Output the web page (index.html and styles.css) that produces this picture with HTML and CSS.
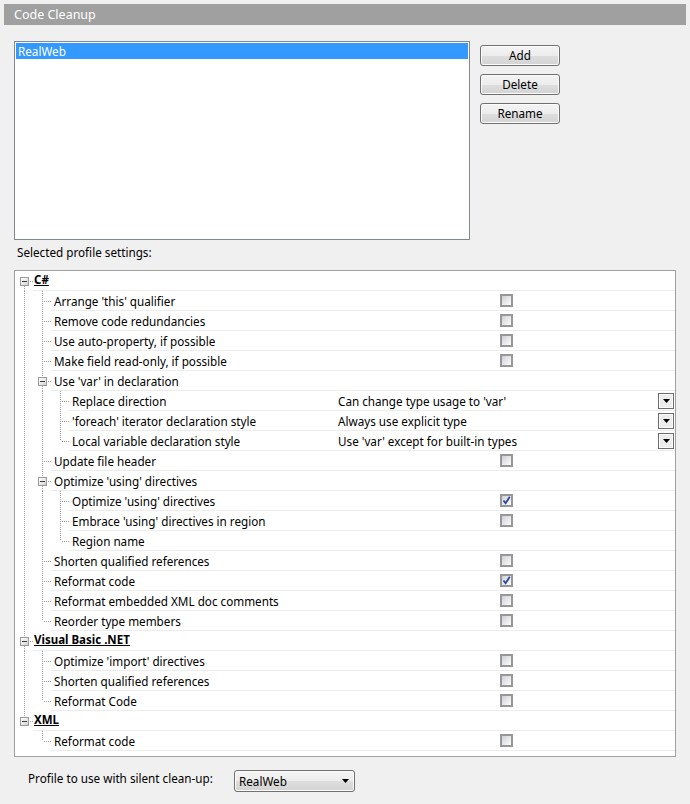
FILE: index.html
```html
<!DOCTYPE html>
<html>
<head>
<meta charset="utf-8">
<link rel="stylesheet" href="styles.css">
</head>
<body>
<div class="header">Code Cleanup</div>

<div class="top">
  <div class="listbox">
    <div class="sel">RealWeb</div>
  </div>
  <div class="buttons">
    <button class="btn">Add</button>
    <button class="btn">Delete</button>
    <button class="btn">Rename</button>
  </div>
</div>

<div class="label">Selected profile settings:</div>

<div class="tree">
  <div class="row"><span class="c x dn"><i class="box"></i></span><div class="content l0"><span class="name head">C#</span></div></div>
  <div class="row"><span class="c v"></span><span class="c t"></span><div class="content l1"><span class="name">Arrange 'this' qualifier</span><span class="val"><i class="cb"></i></span></div></div>
  <div class="row"><span class="c v"></span><span class="c t"></span><div class="content l1"><span class="name">Remove code redundancies</span><span class="val"><i class="cb"></i></span></div></div>
  <div class="row"><span class="c v"></span><span class="c t"></span><div class="content l1"><span class="name">Use auto-property, if possible</span><span class="val"><i class="cb"></i></span></div></div>
  <div class="row"><span class="c v"></span><span class="c t"></span><div class="content l1"><span class="name">Make field read-only, if possible</span><span class="val"><i class="cb"></i></span></div></div>
  <div class="row"><span class="c v"></span><span class="c x up dn"><i class="box"></i></span><div class="content l1"><span class="name">Use 'var' in declaration</span></div></div>
  <div class="row"><span class="c v"></span><span class="c v"></span><span class="c t"></span><div class="content l2"><span class="name">Replace direction</span><span class="val drop"><span class="dtext">Can change type usage to 'var'</span><i class="dbtn"><svg width="7" height="4" viewBox="0 0 7 4"><polygon points="0,0 7,0 3.5,4" fill="#000"/></svg></i></span></div></div>
  <div class="row"><span class="c v"></span><span class="c v"></span><span class="c t"></span><div class="content l2"><span class="name">'foreach' iterator declaration style</span><span class="val drop"><span class="dtext">Always use explicit type</span><i class="dbtn"><svg width="7" height="4" viewBox="0 0 7 4"><polygon points="0,0 7,0 3.5,4" fill="#000"/></svg></i></span></div></div>
  <div class="row"><span class="c v"></span><span class="c v"></span><span class="c l"></span><div class="content l2"><span class="name">Local variable declaration style</span><span class="val drop"><span class="dtext">Use 'var' except for built-in types</span><i class="dbtn"><svg width="7" height="4" viewBox="0 0 7 4"><polygon points="0,0 7,0 3.5,4" fill="#000"/></svg></i></span></div></div>
  <div class="row"><span class="c v"></span><span class="c t"></span><div class="content l1"><span class="name">Update file header</span><span class="val"><i class="cb"></i></span></div></div>
  <div class="row"><span class="c v"></span><span class="c x up dn"><i class="box"></i></span><div class="content l1"><span class="name">Optimize 'using' directives</span></div></div>
  <div class="row"><span class="c v"></span><span class="c v"></span><span class="c t"></span><div class="content l2"><span class="name">Optimize 'using' directives</span><span class="val"><i class="cb"><svg width="9" height="9" viewBox="0 0 9 9"><path d="M1.5 4.5 L3.6 7.3 L7.8 0.8" fill="none" stroke="#2f44a0" stroke-width="1.8"/></svg></i></span></div></div>
  <div class="row"><span class="c v"></span><span class="c v"></span><span class="c t"></span><div class="content l2"><span class="name">Embrace 'using' directives in region</span><span class="val"><i class="cb"></i></span></div></div>
  <div class="row"><span class="c v"></span><span class="c v"></span><span class="c l"></span><div class="content l2"><span class="name">Region name</span></div></div>
  <div class="row"><span class="c v"></span><span class="c t"></span><div class="content l1"><span class="name">Shorten qualified references</span><span class="val"><i class="cb"></i></span></div></div>
  <div class="row"><span class="c v"></span><span class="c t"></span><div class="content l1"><span class="name">Reformat code</span><span class="val"><i class="cb"><svg width="9" height="9" viewBox="0 0 9 9"><path d="M1.5 4.5 L3.6 7.3 L7.8 0.8" fill="none" stroke="#2f44a0" stroke-width="1.8"/></svg></i></span></div></div>
  <div class="row"><span class="c v"></span><span class="c t"></span><div class="content l1"><span class="name">Reformat embedded XML doc comments</span><span class="val"><i class="cb"></i></span></div></div>
  <div class="row"><span class="c v"></span><span class="c l"></span><div class="content l1"><span class="name">Reorder type members</span><span class="val"><i class="cb"></i></span></div></div>
  <div class="row"><span class="c x up dn"><i class="box"></i></span><div class="content l0"><span class="name head">Visual Basic .NET</span></div></div>
  <div class="row"><span class="c v"></span><span class="c t"></span><div class="content l1"><span class="name">Optimize 'import' directives</span><span class="val"><i class="cb"></i></span></div></div>
  <div class="row"><span class="c v"></span><span class="c t"></span><div class="content l1"><span class="name">Shorten qualified references</span><span class="val"><i class="cb"></i></span></div></div>
  <div class="row"><span class="c v"></span><span class="c l"></span><div class="content l1"><span class="name">Reformat Code</span><span class="val"><i class="cb"></i></span></div></div>
  <div class="row"><span class="c x up"><i class="box"></i></span><div class="content l0"><span class="name head">XML</span></div></div>
  <div class="row"><span class="c"></span><span class="c l"></span><div class="content l1"><span class="name">Reformat code</span><span class="val"><i class="cb"></i></span></div></div>
</div>

<div class="bottom">
  <span class="blabel">Profile to use with silent clean-up:</span>
  <div class="combo"><span>RealWeb</span><svg width="7" height="4" viewBox="0 0 7 4"><polygon points="0,0 7,0 3.5,4" fill="#000"/></svg></div>
</div>
</body>
</html>
```

FILE: styles.css
```css
:root {
  --dv: repeating-linear-gradient(to bottom, #a0a0a0 0 1px, transparent 1px 2px);
  --dh: repeating-linear-gradient(to right, #a0a0a0 0 1px, transparent 1px 2px);
}

html, body {
  margin: 0;
  padding: 0;
  background: #f0f0f0;
}

body {
  font-family: "Noto Sans", "Liberation Sans", sans-serif;
  font-size: 11.7px;
  color: #000;
}

.header {
  margin: 4px 4px 0 4px;
  height: 21px;
  line-height: 21px;
  background: #a0a0a0;
  color: #fff;
  padding-left: 10px;
  font-size: 12.5px;
}

.top {
  display: flex;
  margin: 16px 0 0 14px;
}

.listbox {
  width: 456px;
  height: 199px;
  box-sizing: border-box;
  border: 1px solid #828790;
  background: #fff;
  padding: 1px;
}

.sel {
  height: 16px;
  line-height: 16px;
  background: #3399ff;
  color: #fff;
  padding-left: 2px;
}

.buttons {
  display: flex;
  flex-direction: column;
  gap: 8px;
  margin-left: 10px;
  padding-top: 4px;
}

.btn {
  width: 80px;
  height: 21px;
  box-sizing: border-box;
  border: 1px solid #707070;
  border-radius: 3px;
  background: linear-gradient(#f4f4f4 0%, #ececec 50%, #dedede 51%, #d3d3d3 100%);
  box-shadow: inset 0 0 0 1px #fcfcfc;
  font: inherit;
  color: #000;
  padding: 0;
  line-height: 17px;
}

.label {
  margin: 4px 0 0 17px;
  line-height: 16px;
}

.tree {
  margin: 10px 0 0 14px;
  width: 662px;
  box-sizing: border-box;
  border: 1px solid #a0a0a0;
  background: #fff;
  padding-bottom: 5px;
}

.row {
  display: flex;
  height: 20px;
}

.c {
  flex: none;
  width: 18px;
  height: 20px;
  display: block;
}

.c.v {
  background: var(--dv) 9px 0 / 1px 20px no-repeat;
}

.c.t {
  background:
    var(--dv) 9px 0 / 1px 20px no-repeat,
    var(--dh) 11px 10px / 7px 1px no-repeat;
}

.c.l {
  background:
    var(--dv) 9px 0 / 1px 10px no-repeat,
    var(--dh) 11px 10px / 7px 1px no-repeat;
}

.c.x {
  background: var(--dh) 15px 10px / 3px 1px no-repeat;
}

.c.x.up {
  background:
    var(--dv) 9px 0 / 1px 6px no-repeat,
    var(--dh) 15px 10px / 3px 1px no-repeat;
}

.c.x.dn {
  background:
    var(--dv) 9px 15px / 1px 5px no-repeat,
    var(--dh) 15px 10px / 3px 1px no-repeat;
}

.c.x.up.dn {
  background:
    var(--dv) 9px 0 / 1px 6px no-repeat,
    var(--dv) 9px 15px / 1px 5px no-repeat,
    var(--dh) 15px 10px / 3px 1px no-repeat;
}

.box {
  display: block;
  width: 9px;
  height: 9px;
  box-sizing: border-box;
  margin: 6px 0 0 5px;
  border: 1px solid #9a9a9a;
  background:
    linear-gradient(#3c3c3c, #3c3c3c) 1px 3px / 5px 1px no-repeat,
    linear-gradient(135deg, #ffffff 0%, #e6e6e6 60%, #cfcfcf 100%);
}

.content {
  flex: 1;
  display: flex;
  align-items: center;
  height: 20px;
  box-sizing: border-box;
  border-bottom: 1px solid #ececec;
}

.name {
  flex: none;
  box-sizing: border-box;
  white-space: nowrap;
  padding-left: 3px;
}

.l0 .name { width: 305px; padding-left: 1px; }
.l1 .name { width: 287px; }
.l2 .name { width: 269px; }

.name.head {
  font-weight: bold;
  text-decoration: underline;
  text-underline-offset: 1px;
  font-size: 11.5px;
  margin-top: -3px;
}

.val {
  flex: 1;
  display: flex;
  justify-content: center;
  align-items: center;
}

.cb {
  display: flex;
  align-items: center;
  justify-content: center;
  width: 13px;
  height: 13px;
  box-sizing: border-box;
  border: 2px solid #979797;
  background: linear-gradient(135deg, #cdd0d6 0%, #e9eaec 55%, #fbfbfb 100%);
}

.val.drop {
  justify-content: space-between;
}

.dtext {
  white-space: nowrap;
}

.dbtn {
  display: flex;
  align-items: center;
  justify-content: center;
  width: 16px;
  height: 16px;
  box-sizing: border-box;
  margin-right: 1px;
  border: 1px solid #6c6c6c;
  background: #ececec;
  box-shadow: inset 0 0 0 1px #fbfbfb;
}

.bottom {
  display: flex;
  align-items: flex-start;
  margin: 13px 0 0 28px;
}

.blabel {
  width: 206px;
  flex: none;
  line-height: 16px;
}

.combo {
  width: 121px;
  height: 22px;
  box-sizing: border-box;
  border: 1px solid #707070;
  border-radius: 3px;
  background: linear-gradient(#f4f4f4 0%, #ececec 50%, #dedede 51%, #d3d3d3 100%);
  box-shadow: inset 0 0 0 1px #fcfcfc;
  display: flex;
  align-items: center;
  justify-content: space-between;
  padding: 0 5px 0 4px;
}
```
